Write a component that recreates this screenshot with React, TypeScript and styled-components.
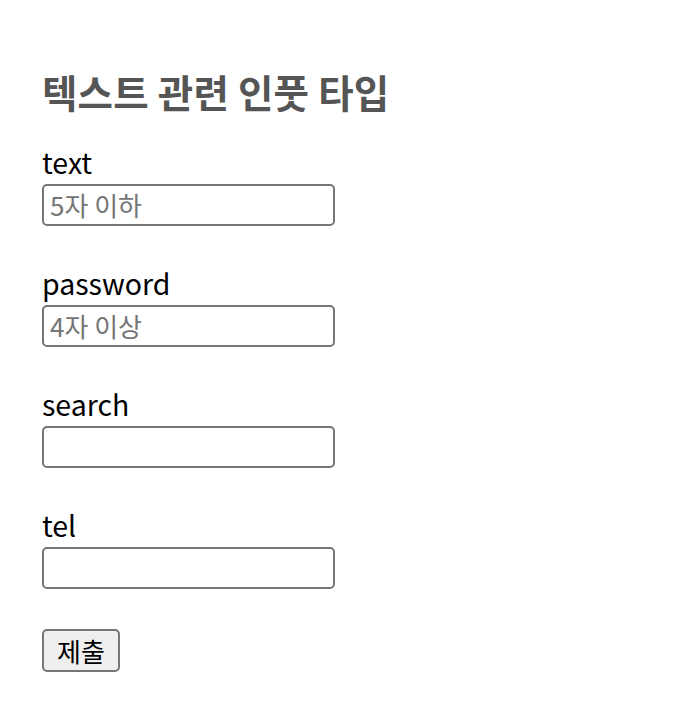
import React from "react";
import styled, { createGlobalStyle } from "styled-components";

const Global = createGlobalStyle`
  html, body { margin: 0; padding: 0; background: #fff; }
  body { font-family: "Noto Sans CJK KR", "Noto Sans", sans-serif; }
`;

const Page = styled.main`
  padding: 64px 42px 40px;
`;

const Title = styled.h1`
  margin: 0 0 32px;
  font-size: 38.5px;
  line-height: 54px;
  font-weight: 700;
  color: #555;
  letter-spacing: 0.2px;
`;

const Form = styled.form`
  display: flex;
  flex-direction: column;
  align-items: flex-start;
`;

const Field = styled.div`
  display: flex;
  flex-direction: column;
  align-items: flex-start;
  & + & { margin-top: 45px; }
`;

const Label = styled.label`
  font-size: 28.5px;
  line-height: 23px;
  padding-bottom: 11px;
  color: #000;
`;

const Input = styled.input`
  box-sizing: border-box;
  width: 293px;
  height: 42px;
  border: 2px solid #767676;
  border-radius: 5px;
  padding: 0 6px 2px;
  font-family: inherit;
  font-size: 26px;
  color: #000;
  &::placeholder { color: #757575; }
`;

const Button = styled.button`
  box-sizing: border-box;
  width: 78px;
  height: 43px;
  margin-top: 40px;
  border: 2px solid #767676;
  border-radius: 5px;
  background: #efefef;
  font-family: inherit;
  font-size: 26px;
  line-height: 1;
  color: #000;
  padding: 0;
`;

export default function App() {
  return (
    <Page>
      <Global />
      <Title>텍스트 관련 인풋 타입</Title>
      <Form onSubmit={(e) => e.preventDefault()}>
        <Field>
          <Label htmlFor="t">text</Label>
          <Input id="t" type="text" placeholder="5자 이하" />
        </Field>
        <Field>
          <Label htmlFor="p">password</Label>
          <Input id="p" type="password" placeholder="4자 이상" />
        </Field>
        <Field>
          <Label htmlFor="s">search</Label>
          <Input id="s" type="search" />
        </Field>
        <Field>
          <Label htmlFor="tel">tel</Label>
          <Input id="tel" type="tel" />
        </Field>
        <Button type="submit">제출</Button>
      </Form>
    </Page>
  );
}
